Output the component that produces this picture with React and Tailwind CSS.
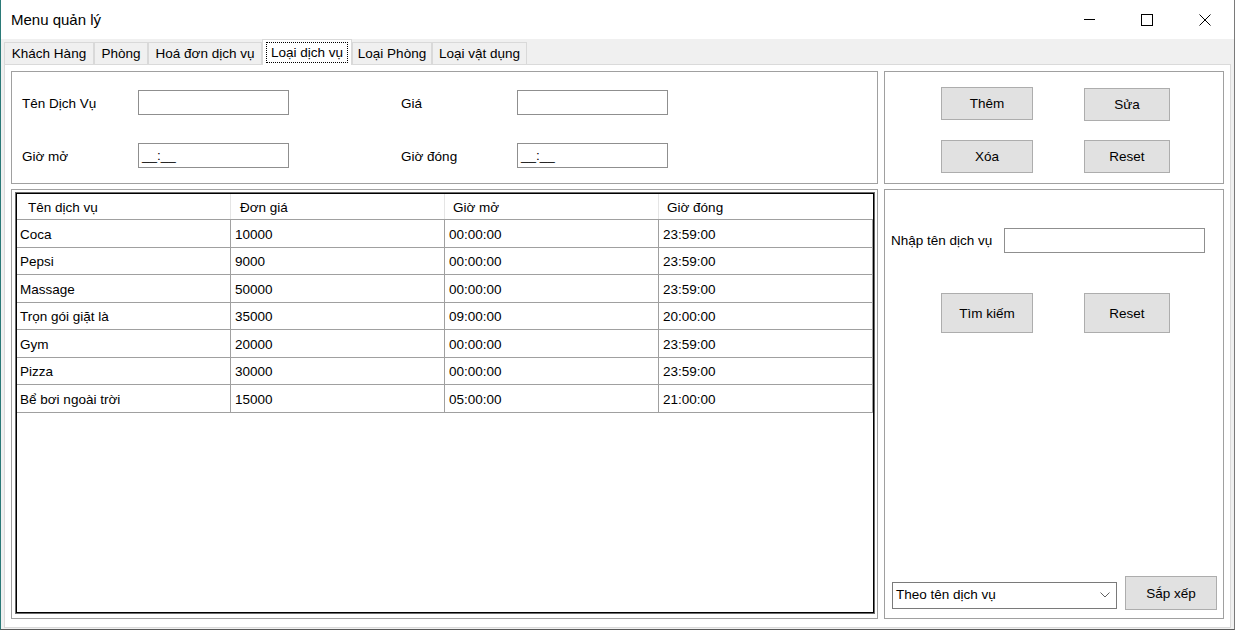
import React from "react";

const rows = [
  { name: "Coca", price: "10000", open: "00:00:00", close: "23:59:00", h: "h-[28px]" },
  { name: "Pepsi", price: "9000", open: "00:00:00", close: "23:59:00", h: "h-[27px]" },
  { name: "Massage", price: "50000", open: "00:00:00", close: "23:59:00", h: "h-[28px]" },
  { name: "Trọn gói giặt là", price: "35000", open: "09:00:00", close: "20:00:00", h: "h-[27px]" },
  { name: "Gym", price: "20000", open: "00:00:00", close: "23:59:00", h: "h-[28px]" },
  { name: "Pizza", price: "30000", open: "00:00:00", close: "23:59:00", h: "h-[27px]" },
  { name: "Bể bơi ngoài trời", price: "15000", open: "05:00:00", close: "21:00:00", h: "h-[28px]" },
];

function Btn({ children, className }) {
  return (
    <div
      className={
        "flex items-center justify-center pt-[2px] bg-[#e1e1e1] border border-[#adadad] text-[13.5px] text-black " +
        className
      }
    >
      {children}
    </div>
  );
}

function Input({ className, children }) {
  return (
    <div
      className={
        "bg-white border border-[#8f8f8f] flex items-center pl-[3px] pt-[2px] text-[13.5px] " + className
      }
    >
      {children}
    </div>
  );
}

function Tab({ children, className }) {
  return (
    <div
      className={
        "h-[22px] flex items-center justify-center pt-[2px] bg-[#f0f0f0] border border-[#d9d9d9] border-b-0 text-[13.5px] " +
        className
      }
    >
      {children}
    </div>
  );
}

export default function App() {
  return (
    <div className="w-[1235px] h-[630px] overflow-hidden bg-[#f0f0f0] font-[Liberation_Sans,Arial,sans-serif] text-black border-l border-l-[#2b7a78] border-r border-r-[#7a7a7a] border-b border-b-[#5a5a5a] flex flex-col">
      {/* Title bar */}
      <div className="h-[39px] bg-white flex items-center shrink-0">
        <div className="pl-[10px] pt-[2px] text-[15px] flex-1">Menu quản lý</div>
        <div className="flex h-full">
          <div className="w-[58px] flex items-center justify-center">
            <div className="w-[11px] h-px bg-black" />
          </div>
          <div className="w-[58px] flex items-center justify-center">
            <div className="w-[12px] h-[12px] border border-black" />
          </div>
          <div className="w-[58px] flex items-center justify-center">
            <svg width="12" height="12" viewBox="0 0 12 12">
              <path d="M0.5 0.5 L11.5 11.5 M11.5 0.5 L0.5 11.5" stroke="black" strokeWidth="1" fill="none" />
            </svg>
          </div>
        </div>
      </div>

      {/* Tab strip */}
      <div className="h-[25px] shrink-0 flex items-end pl-[3px] relative z-10">
        <Tab className="w-[90px]">Khách Hàng</Tab>
        <Tab className="w-[54px]">Phòng</Tab>
        <Tab className="w-[114px]">Hoá đơn dịch vụ</Tab>
        <div className="h-[26px] w-[90px] -mb-px bg-white border border-[#d9d9d9] border-b-0 flex items-start justify-center pt-[2px] px-[3px]">
          <div className="w-full h-[21px] border border-dotted border-black flex items-center justify-center pt-[2px] text-[13.5px]">
            Loại dịch vụ
          </div>
        </div>
        <Tab className="w-[80px]">Loại Phòng</Tab>
        <Tab className="w-[95px]">Loại vật dụng</Tab>
      </div>

      {/* Tab page */}
      <div className="mx-[3px] h-[564px] shrink-0 bg-white border border-[#dadada] pl-[6px] pr-[6px] pt-[6px] pb-[8px] grid grid-cols-[867px_340px] grid-rows-[113px_430px] gap-x-[6px] gap-y-[5px]">
        {/* Info group */}
        <div className="border border-[#a0a0a0] pt-[18px] pl-[10px] flex flex-col gap-[29px]">
          <div className="flex items-center">
            <div className="w-[116px] pt-[3px] text-[13.5px]">Tên Dịch Vụ</div>
            <Input className="w-[151px] h-[25px]" />
            <div className="w-[112px]" />
            <div className="w-[116px] pt-[3px] text-[13.5px]">Giá</div>
            <Input className="w-[151px] h-[25px]" />
          </div>
          <div className="flex items-center -mt-[1px]">
            <div className="w-[116px] pt-[3px] text-[13.5px]">Giờ mở</div>
            <Input className="w-[151px] h-[25px]">__:__</Input>
            <div className="w-[112px]" />
            <div className="w-[116px] pt-[3px] text-[13.5px]">Giờ đóng</div>
            <Input className="w-[151px] h-[25px]">__:__</Input>
          </div>
        </div>

        {/* Buttons group */}
        <div className="border border-[#a0a0a0] pt-[15px] pl-[56px]">
          <div className="grid grid-cols-[92px_86px] gap-x-[51px] gap-y-[19px]">
            <Btn className="h-[33px]">Thêm</Btn>
            <Btn className="h-[33px] mt-[1px]">Sửa</Btn>
            <Btn className="h-[33px]">Xóa</Btn>
            <Btn className="h-[33px]">Reset</Btn>
          </div>
        </div>

        {/* Grid group */}
        <div className="border border-[#a0a0a0] pt-[2px] pb-[4px] px-[3px] flex">
          <div className="flex-1 border border-[#6b6b6b]">
            <div className="h-full border border-black bg-white text-[13.5px]">
              <div className="flex h-[26px] border-b border-[#a0a0a0]">
                <div className="w-[214px] border-r border-[#e5e5e5] pl-[11px] pt-[3px] flex items-center">Tên dịch vụ</div>
                <div className="w-[214px] border-r border-[#e5e5e5] pl-[9px] pt-[3px] flex items-center">Đơn giá</div>
                <div className="w-[214px] border-r border-[#e5e5e5] pl-[8px] pt-[3px] flex items-center">Giờ mở</div>
                <div className="w-[214px] pl-[8px] pt-[3px] flex items-center">Giờ đóng</div>
              </div>
              {rows.map((r) => (
                <div key={r.name} className={"flex w-[856px] border-b border-[#a0a0a0] " + r.h}>
                  <div className="w-[214px] border-r border-[#a0a0a0] pl-[3px] pt-[3px] flex items-center">{r.name}</div>
                  <div className="w-[214px] border-r border-[#a0a0a0] pl-[4px] pt-[3px] flex items-center">{r.price}</div>
                  <div className="w-[214px] border-r border-[#a0a0a0] pl-[4px] pt-[3px] flex items-center">{r.open}</div>
                  <div className="w-[214px] border-r border-[#a0a0a0] pl-[4px] pt-[3px] flex items-center">{r.close}</div>
                </div>
              ))}
            </div>
          </div>
        </div>

        {/* Search group */}
        <div className="border border-[#a0a0a0] flex flex-col pt-[38px] pb-[8px]">
          <div className="flex items-center pl-[6px]">
            <div className="w-[113px] pt-[2px] text-[13.5px]">Nhập tên dịch vụ</div>
            <Input className="w-[201px] h-[25px]" />
          </div>
          <div className="flex pl-[56px] gap-x-[51px] mt-[40px]">
            <Btn className="w-[92px] h-[40px]">Tìm kiếm</Btn>
            <Btn className="w-[86px] h-[40px]">Reset</Btn>
          </div>
          <div className="flex-1" />
          <div className="flex items-center pl-[7px] gap-x-[8px]">
            <div className="w-[225px] h-[27px] mt-[4px] border border-[#7a7a7a] bg-white flex items-center pl-[3px] pr-[6px] text-[13.5px]">
              <div className="flex-1 pt-[1px]">Theo tên dịch vụ</div>
              <svg width="10" height="6" viewBox="0 0 10 6">
                <path d="M0.5 0.5 L5 5 L9.5 0.5" stroke="#606060" strokeWidth="1" fill="none" />
              </svg>
            </div>
            <Btn className="w-[92px] h-[34px]">Sắp xếp</Btn>
          </div>
        </div>
      </div>
    </div>
  );
}
